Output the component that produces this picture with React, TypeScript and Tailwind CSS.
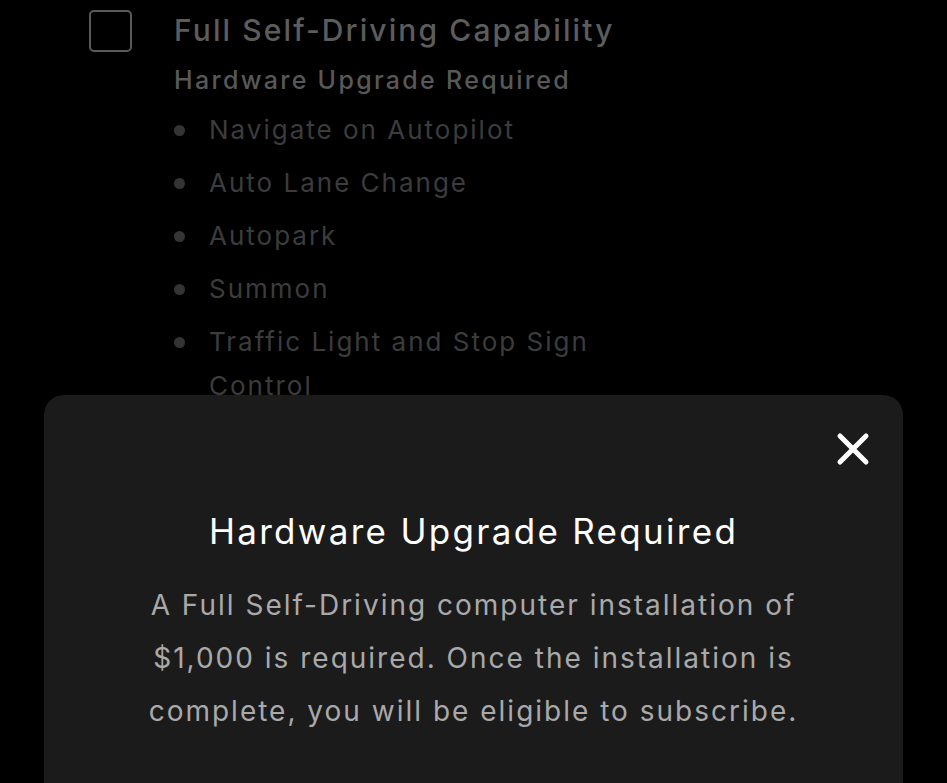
import React from "react";

const items = [
  "Navigate on Autopilot",
  "Auto Lane Change",
  "Autopark",
  "Summon",
  "Traffic Light and Stop Sign Control",
];

export default function App() {
  return (
    <div
      className="relative h-[783px] w-[947px] overflow-hidden bg-black"
      style={{ fontFamily: "Inter, 'Open Sans', sans-serif" }}
    >
      <div className="flex gap-[42px] pl-[89px] pt-[10px]">
        <div className="h-[42px] w-[43px] shrink-0 rounded-[5px] border-2 border-[#5a5a5a]" />
        <div className="flex flex-col">
          <div className="text-[30px] leading-[40px] font-medium tracking-[2.1px] text-[#5c5c5c]">
            Full Self-Driving Capability
          </div>
          <div className="mt-[14px] text-[25px] leading-[32px] font-medium tracking-[2.3px] text-[#585858]">
            Hardware Upgrade Required
          </div>
          <ul className="mt-[12px] flex w-[430px] flex-col gap-[9px]">
            {items.map((t) => (
              <li key={t} className="flex text-[26px] leading-[44px] tracking-[2px] text-[#3c3c3c]">
                <span className="mt-[17px] h-[11px] w-[11px] shrink-0 rounded-full bg-[#343434]" />
                <span className="ml-[24px]">{t}</span>
              </li>
            ))}
          </ul>
        </div>
      </div>

      <div className="absolute left-[44px] top-[395px] h-[420px] w-[859px] rounded-[20px] bg-[#1b1b1c]">
        <button className="absolute right-[33px] top-[37px] flex h-[34px] w-[34px] items-center justify-center">
          <svg viewBox="0 0 34 34" width="34" height="34">
            <path d="M4 4 L30 30 M30 4 L4 30" stroke="#fff" strokeWidth="5" strokeLinecap="round" />
          </svg>
        </button>
        <div className="flex flex-col items-center pt-[112px]">
          <div className="text-[35px] leading-[48px] tracking-[2.3px] text-white">
            Hardware Upgrade Required
          </div>
          <p className="mt-[24px] w-[700px] text-center text-[28px] leading-[53px] tracking-[2px] text-[#a9a9a9]">
            A Full Self-Driving computer installation of $1,000 is required. Once the installation is complete, you will be eligible to subscribe.
          </p>
        </div>
      </div>
    </div>
  );
}
